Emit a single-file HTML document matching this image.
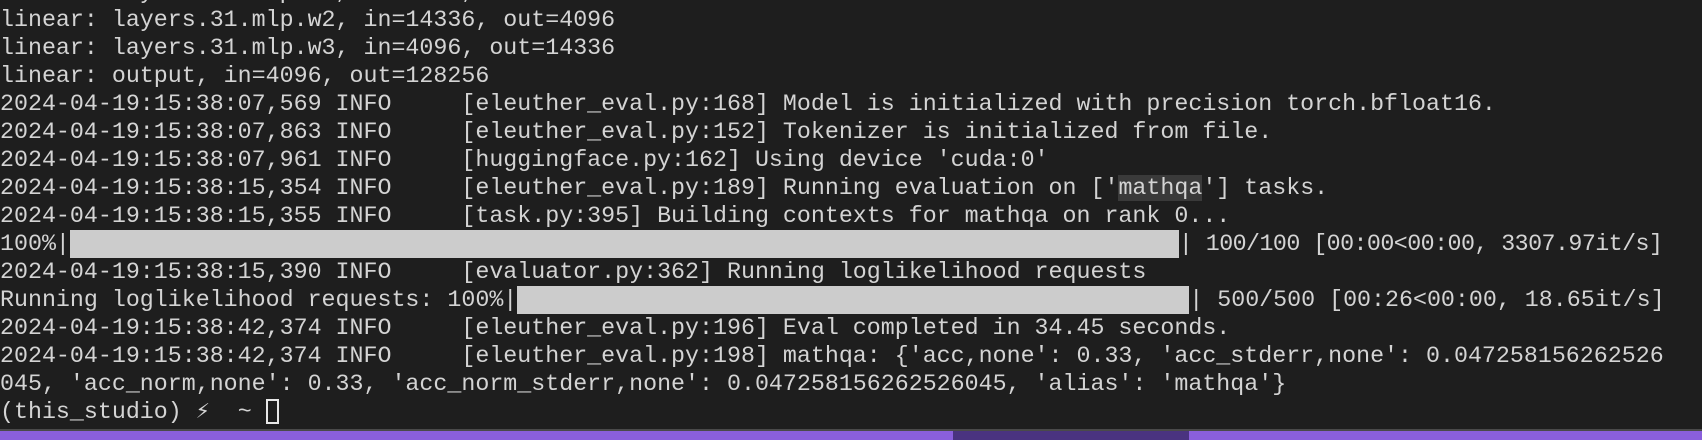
<!DOCTYPE html>
<html><head><meta charset="utf-8"><style>
html,body{margin:0;padding:0;background:#1e1e1e;width:1702px;height:440px;overflow:hidden}
pre{position:absolute;left:0;top:-22px;margin:0;font-family:"Liberation Mono","DejaVu Sans Mono",monospace;font-size:23.3px;line-height:28px;color:#d4d4d4;white-space:pre}
.bar{display:inline-block;background:#cccccc;height:28px;vertical-align:top}
.hl{background:#3a3a3a}
.cur{display:inline-block;width:13px;height:25px;border:2px solid #e8e8e8;vertical-align:top;margin-top:1px;box-sizing:border-box}
.g{position:absolute;left:0;top:429px;width:1702px;height:2px;background:#4a4a4a}
.p{position:absolute;left:0;top:431px;width:1702px;height:9px;background:#8a5fdc}
.d{position:absolute;left:953px;top:431px;width:236px;height:9px;background:#4a3380}
</style></head><body>
<pre>linear: layers.31.mlp.w1, in=4096, out=14336
linear: layers.31.mlp.w2, in=14336, out=4096
linear: layers.31.mlp.w3, in=4096, out=14336
linear: output, in=4096, out=128256
2024-04-19:15:38:07,569 INFO     [eleuther_eval.py:168] Model is initialized with precision torch.bfloat16.
2024-04-19:15:38:07,863 INFO     [eleuther_eval.py:152] Tokenizer is initialized from file.
2024-04-19:15:38:07,961 INFO     [huggingface.py:162] Using device 'cuda:0'
2024-04-19:15:38:15,354 INFO     [eleuther_eval.py:189] Running evaluation on ['<span class="hl">mathqa</span>'] tasks.
2024-04-19:15:38:15,355 INFO     [task.py:395] Building contexts for mathqa on rank 0...
100%|<span class="bar" style="width:1109px"></span><span style="letter-spacing:-0.55px">| 100/100 [00:00&lt;00:00, 3307.97it/s]</span>
2024-04-19:15:38:15,390 INFO     [evaluator.py:362] Running loglikelihood requests
Running loglikelihood requests: 100%|<span class="bar" style="width:672px"></span>| 500/500 [00:26&lt;00:00, 18.65it/s]
2024-04-19:15:38:42,374 INFO     [eleuther_eval.py:196] Eval completed in 34.45 seconds.
2024-04-19:15:38:42,374 INFO     [eleuther_eval.py:198] mathqa: {'acc,none': 0.33, 'acc_stderr,none': 0.047258156262526
045, 'acc_norm,none': 0.33, 'acc_norm_stderr,none': 0.047258156262526045, 'alias': 'mathqa'}
(this_studio) ⚡  ~ <span class="cur"></span></pre>
<div class="g"></div><div class="p"></div><div class="d"></div>
</body></html>
